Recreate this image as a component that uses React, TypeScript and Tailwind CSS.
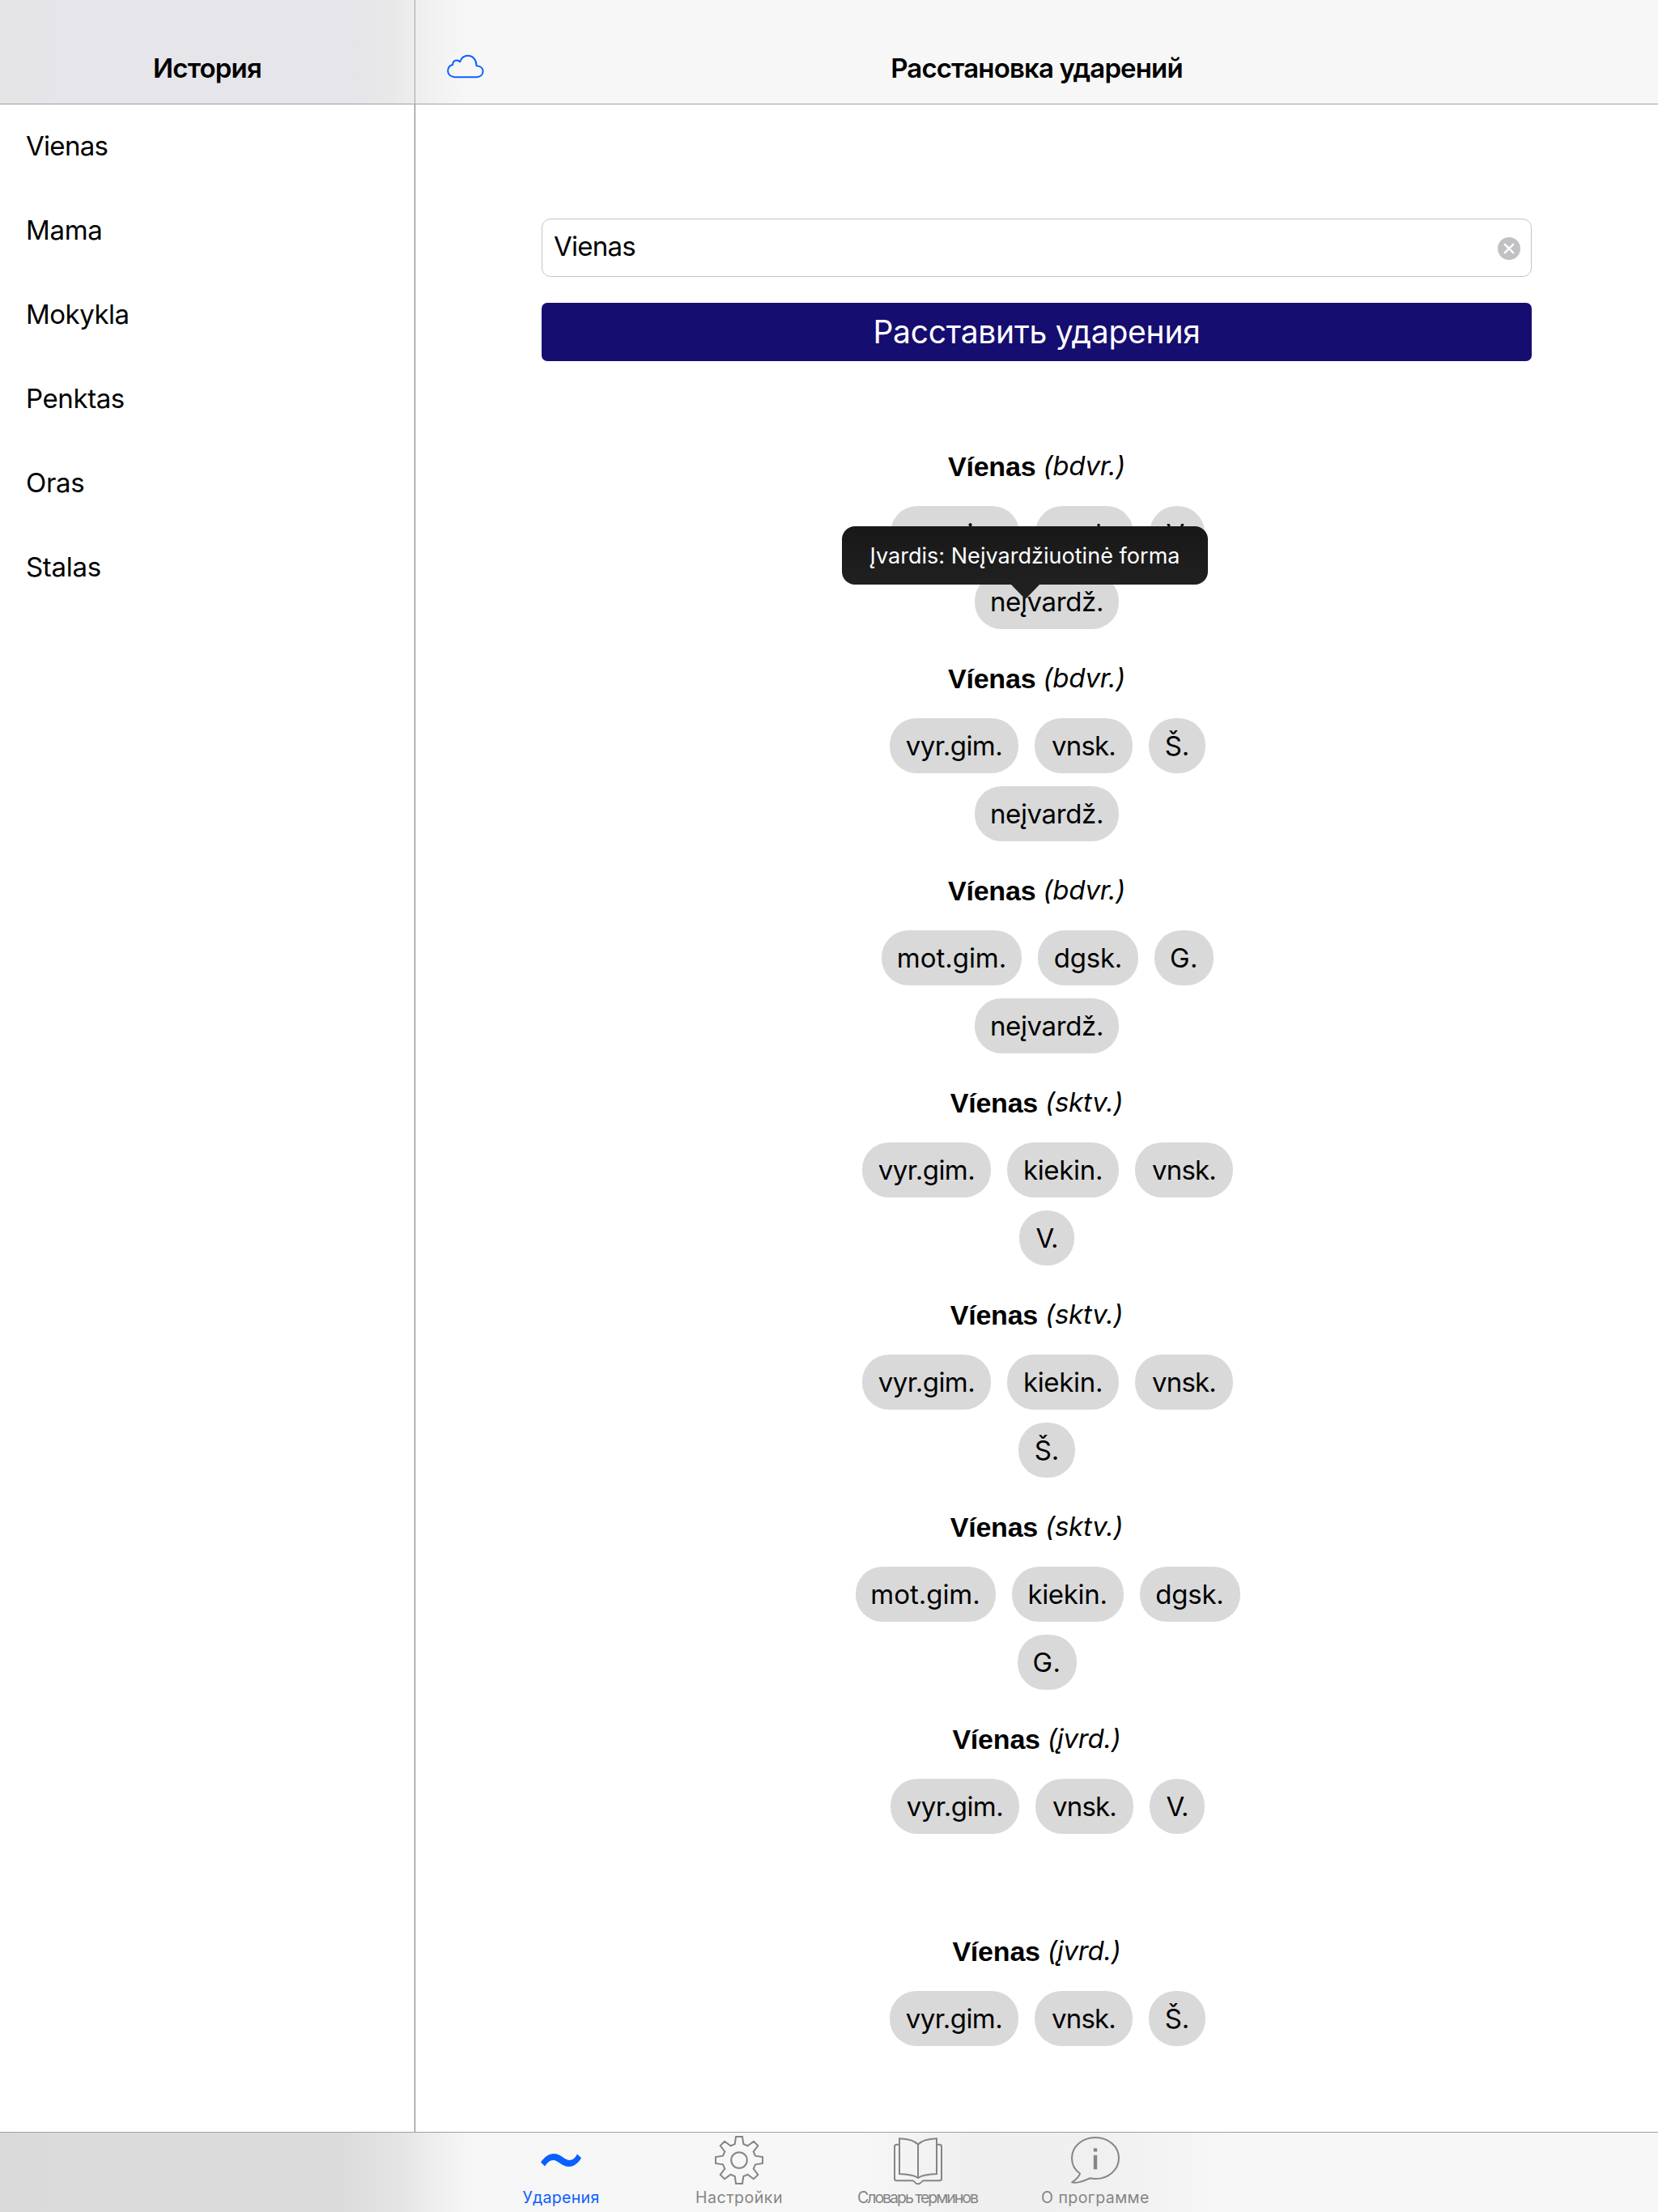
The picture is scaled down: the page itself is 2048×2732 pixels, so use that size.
import React from 'react';

type Chip = { label: string; cls: string };

const CHIPS: Record<string, Chip> = {
  vyr: { label: 'vyr.gim.', cls: 'w-[159px] tracking-[-0.51px]' },
  vnsk: { label: 'vnsk.', cls: 'w-[121px] tracking-[-0.77px]' },
  mot: { label: 'mot.gim.', cls: 'w-[173px] tracking-[-0.02px]' },
  dgsk: { label: 'dgsk.', cls: 'w-[124px] tracking-[-0.24px]' },
  kiek: { label: 'kiekin.', cls: 'w-[138px] tracking-[-0.32px]' },
  neiv: { label: 'neįvardž.', cls: 'w-[178px] tracking-[-0.37px]' },
  V: { label: 'V.', cls: 'w-[68px] tracking-[-1px]' },
  S: { label: 'Š.', cls: 'w-[70px] tracking-[-0.17px]' },
  G: { label: 'G.', cls: 'w-[73px] tracking-[0.38px]' },
};

const ENTRIES: { kind: string; rows: string[][]; tip?: string }[] = [
  { kind: '(bdvr.)', rows: [['vyr', 'vnsk', 'V'], ['neiv']], tip: 'Įvardis: Neįvardžiuotinė forma' },
  { kind: '(bdvr.)', rows: [['vyr', 'vnsk', 'S'], ['neiv']] },
  { kind: '(bdvr.)', rows: [['mot', 'dgsk', 'G'], ['neiv']] },
  { kind: '(sktv.)', rows: [['vyr', 'kiek', 'vnsk'], ['V']] },
  { kind: '(sktv.)', rows: [['vyr', 'kiek', 'vnsk'], ['S']] },
  { kind: '(sktv.)', rows: [['mot', 'kiek', 'dgsk'], ['G']] },
  { kind: '(įvrd.)', rows: [['vyr', 'vnsk', 'V']] },
  { kind: '(įvrd.)', rows: [['vyr', 'vnsk', 'S']] },
];

const HISTORY = [
  { word: 'Vienas', cls: 'pl-[32px] tracking-[-0.7px]' },
  { word: 'Mama', cls: 'pl-[32px] tracking-[-0.3px]' },
  { word: 'Mokykla', cls: 'pl-[32px] tracking-[-0.5px]' },
  { word: 'Penktas', cls: 'pl-[32px] tracking-[-0.4px]' },
  { word: 'Oras', cls: 'pl-[32px] tracking-[-0.3px]' },
  { word: 'Stalas', cls: 'pl-[32px] tracking-[-0.3px]' },
];

function CloudIcon() {
  return (
    <svg width="46" height="30" viewBox="0 0 46 30" fill="none" stroke="#0a60ff" strokeWidth="2" strokeLinejoin="round">
      <path d="M9.5 28.3 C4.5 27.8 1.2 24.8 1.2 20.6 C1.2 16.6 3.6 13.8 7.2 13 C7.2 9.4 9.2 7.4 12 7.4 C13.7 7.4 15.2 8 16.2 9.4 C17.8 4.4 21.4 1.8 26 1.8 C32 1.8 36.4 6.4 36.6 14.2 C41.4 14.4 44.6 17.2 44.6 21 C44.6 25 41.6 28 36.6 28.3 Z" />
    </svg>
  );
}

function ClearIcon() {
  return (
    <svg width="28" height="28" viewBox="0 0 28 28">
      <circle cx="14" cy="14" r="14" fill="#c1c1c3" />
      <path d="M8.8 8.8 L19.2 19.2 M19.2 8.8 L8.8 19.2" stroke="#fff" strokeWidth="2.4" strokeLinecap="round" />
    </svg>
  );
}

function TildeIcon() {
  return (
    <svg width="50" height="16" viewBox="0 0 50 16" fill="#0a60ff">
      <path d="M0 10.5 C5 3.5 10 0 16 0 C25 0 29 8 36 8 C40 8 42.5 5 45 .6 L50 5.3 C46 12 41 16 35 16 C26 16 21 8 15.5 8 C11 8 8 11 5 15.6 Z" />
    </svg>
  );
}

function GearIcon() {
  return (
    <svg width="60" height="60" viewBox="-30 -30 60 60" fill="none" stroke="#858585" strokeWidth="2">
      <path d="M-5.3 -20 L-4 -29 H4 L5.3 -20 L10.5 -17.7 L18 -23.3 L23.3 -18 L17.7 -10.5 L20 -5.3 L29 -4 V4 L20 5.3 L17.7 10.5 L23.3 18 L18 23.3 L10.5 17.7 L5.3 20 L4 29 H-4 L-5.3 20 L-10.5 17.7 L-18 23.3 L-23.3 18 L-17.7 10.5 L-20 5.3 L-29 4 V-4 L-20 -5.3 L-17.7 -10.5 L-23.3 -18 L-18 -23.3 L-10.5 -17.7 Z" />
      <circle r="9.8" />
    </svg>
  );
}

function BookIcon() {
  return (
    <svg className="mt-[3px] ml-[2px]" width="60" height="59" viewBox="0 0 60 59" fill="none" stroke="#858585" strokeWidth="2">
      <path d="M7 1.2 C16 1.6 25 3 30 8.5 C35 3 44 1.6 53 1.2 V45 C44 45.2 35.5 46 30 50 C24.5 46 16 45.2 7 45 Z M30 8.5 V50" />
      <path d="M7 8.7 H3.5 Q1 8.7 1 11.2 V51 Q1 53.3 3.5 53.3 H23 C26 53.3 25.5 57.3 30 57.3 C34.5 57.3 34 53.3 37 53.3 H56.5 Q59 53.3 59 51 V11.2 Q59 8.7 56.5 8.7 H53" />
    </svg>
  );
}

function InfoIcon() {
  return (
    <svg width="60" height="59" viewBox="0 0 60 59" fill="none" stroke="#858585" strokeWidth="2">
      <path d="M11 45.5 C4.5 41 1 34 1 26.5 C1 12 14 1 30 1 S59 12 59 26.5 S46 52 30 52 C27.5 52 26 51.8 23.5 51.2 C17 53.5 9 58.5 1.2 56.3 C6 53 10 49.5 11 45.5 Z" strokeLinejoin="round" />
      <path d="M27.8 14.2 h4.4 v4.2 h-4.4 Z M27.8 22.8 h4.4 v17.4 h-4.4 Z" fill="#858585" stroke="none" />
    </svg>
  );
}

function Tooltip({ text }: { text: string }) {
  return (
    <span className="absolute left-[-164px] top-[-59px] z-10 flex h-[72px] w-[452px] items-center justify-center rounded-[16px] bg-gradient-to-b from-[#181818] to-[#202020] pt-[2px] text-[27px] tracking-[0.03px] whitespace-nowrap text-white">
      {text}
      <svg className="absolute left-[208px] top-[71px]" width="37" height="19" viewBox="0 0 37 19" fill="#202020">
        <path d="M0 0 H37 L20 17.6 Q18.5 19 17 17.6 Z" />
      </svg>
    </span>
  );
}

function Entry({ kind, rows, tip }: { kind: string; rows: string[][]; tip?: string }) {
  return (
    <section className="h-[262px] shrink-0">
      <h2 className="h-[66px] text-center leading-[66px]">
        <span className="font-['Liberation_Sans',sans-serif] text-[34px] font-bold tracking-[-0.2px]">Víenas</span>
        <span className="relative -top-px ml-[9px] tracking-[-0.2px] italic">{kind}</span>
      </h2>
      <div className="mt-[16px] flex flex-col items-center gap-[16px] pl-[27px]">
        {rows.map((row, i) => (
          <div key={i} className={i === 1 ? 'flex gap-[20px] pr-[2px]' : 'flex gap-[20px]'}>
            {row.map((id) => (
              <span
                key={id}
                className={`relative flex h-[68px] items-center justify-center rounded-[33px] bg-[#d9d9d9] pt-[2px] ${CHIPS[id].cls}`}
              >
                {CHIPS[id].label}
                {tip && i === 1 && <Tooltip text={tip} />}
              </span>
            ))}
          </div>
        ))}
      </div>
    </section>
  );
}

const TABS = [
  { label: 'Ударения', icon: <TildeIcon />, cls: 'text-[#0a60ff] tracking-[0.31px]' },
  { label: 'Настройки', icon: <GearIcon />, cls: 'text-[#858585] tracking-[0.54px]' },
  { label: 'Словарь терминов', icon: <BookIcon />, cls: 'text-[#858585] tracking-[-2.02px]' },
  { label: 'О программе', icon: <InfoIcon />, cls: 'text-[#858585] tracking-[0.46px]' },
];

export default function App() {
  return (
    <div className="flex h-[2732px] w-[2048px] flex-col overflow-hidden bg-white font-['Inter',sans-serif] text-[33px] text-black">
      <header className="flex h-[129px] shrink-0 border-b border-[#a0a0a0] bg-[linear-gradient(90deg,#e5e5e7_0px,#e5e5ea_80px,#e5e5ea_430px,#e8e8e9_480px,#f0f0f1_530px,#f7f7f7_575px)]">
        <div className="flex w-[512px] items-center justify-center pt-[42px] font-semibold tracking-[-0.8px]">История</div>
        <div className="w-px bg-[#a6a6aa]" />
        <div className="grid flex-1 grid-cols-[1fr_auto_1fr] items-center px-[39px] pt-[42px]">
          <div className="pb-[7px]">
            <CloudIcon />
          </div>
          <h1 className="font-semibold tracking-[-0.86px]">Расстановка ударений</h1>
          <div />
        </div>
      </header>

      <div className="flex min-h-0 flex-1">
        <aside className="flex w-[512px] flex-col">
          {HISTORY.map((h) => (
            <div key={h.word} className={`flex h-[104px] items-center ${h.cls}`}>
              {h.word}
            </div>
          ))}
        </aside>
        <div className="w-px bg-[#77777b]" />
        <main className="flex flex-1 flex-col overflow-hidden px-[156px] pt-[141px]">
          <div className="flex h-[72px] shrink-0 items-center justify-between rounded-[11px] border border-[#c4c4c4] pr-[13px] pl-[14px]">
            <span className="pb-[2px] tracking-[-0.75px]">Vienas</span>
            <span className="pt-[2px]">
              <ClearIcon />
            </span>
          </div>
          <button className="mt-[32px] flex h-[72px] shrink-0 items-center justify-center rounded-[7px] bg-[#160d70] text-[39px] tracking-[-0.25px] text-white">
            Расставить ударения
          </button>
          <div className="mt-[97px] flex flex-col">
            {ENTRIES.map((e, i) => (
              <Entry key={i} {...e} />
            ))}
          </div>
        </main>
      </div>

      <nav className="flex h-[99px] shrink-0 border-t border-[#a0a0a0] bg-[linear-gradient(90deg,#dadadb_0px,#dbdbdb_100px,#dbdbdb_420px,#e5e5e6_500px,#efefef_540px,#f6f6f6_580px,#f7f7f7_1060px,#efefef_1200px,#f0f0f0_1360px,#f7f7f7_1520px)] pl-[583px]">
        {TABS.map((t) => (
          <div key={t.label} className={`flex w-[220px] flex-col items-center text-[19.5px] whitespace-nowrap ${t.cls}`}>
            <span className="flex h-[68px] items-center">{t.icon}</span>
            <span className="leading-[24px]">{t.label}</span>
          </div>
        ))}
      </nav>
    </div>
  );
}
